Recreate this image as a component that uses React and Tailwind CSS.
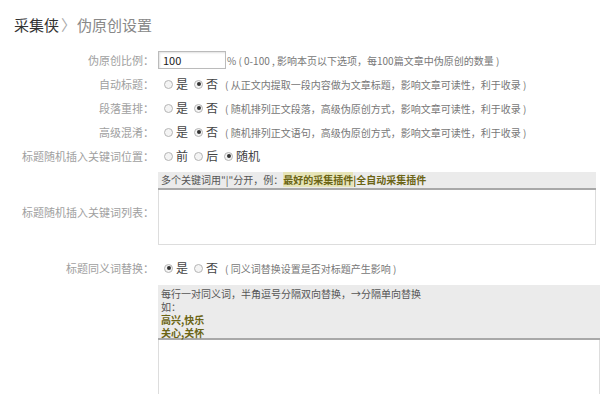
import React from 'react';

const Radio = ({ checked, label }) => (
    <span className="inline-flex items-center mr-[6px]">
        <span className="w-[9px] h-[9px] rounded-full border border-[#b5b5b5] bg-[#f4f4f4] flex items-center justify-center mr-[3px]">
            {checked && <span className="w-[4px] h-[4px] rounded-full bg-[#333]"></span>}
        </span>
        <span className="text-[#444] text-[12px]">{label}</span>
    </span>
);

const Row = ({ label, children, h = 'h-[24px]' }) => (
    <div className={`flex items-center ${h}`}>
        <div className="w-[154px] text-right text-[11px] text-[#a0a0a0] shrink-0">{label}</div>
        <div className="flex items-center pl-[4px] grow">{children}</div>
    </div>
);

const Note = ({ children }) => (
    <span className="text-[10px] text-[#777] ml-[1px]">{children}</span>
);

const App = () => {
    return (
        <div className="w-[600px] h-[394px] bg-white overflow-hidden" style={{ fontFamily: '"Noto Sans CJK SC", "Noto Sans", sans-serif' }}>
            <div className="pl-[14px] pt-[14px] h-[48px] text-[15px] flex items-start">
                <span className="text-[#333]">采集侠</span>
                <span className="text-[#aaa] ml-[2px] mr-[1px]">〉</span>
                <span className="text-[#888]">伪原创设置</span>
            </div>

            <Row label="伪原创比例：">
                <div className="w-[68px] h-[18px] border border-[#bbb] shadow-[inset_1px_1px_2px_rgba(0,0,0,0.12)] text-[11px] text-[#222] pl-[4px] leading-[16px]">100</div>
                <Note>% ( 0-100 , 影响本页以下选项，每100篇文章中伪原创的数量 )</Note>
            </Row>
            <Row label="自动标题：">
                <span className="w-[6px]"></span>
                <Radio label="是" />
                <Radio checked label="否" />
                <Note>( 从正文内提取一段内容做为文章标题，影响文章可读性，利于收录 )</Note>
            </Row>
            <Row label="段落重排：">
                <span className="w-[6px]"></span>
                <Radio label="是" />
                <Radio checked label="否" />
                <Note>( 随机排列正文段落，高级伪原创方式，影响文章可读性，利于收录 )</Note>
            </Row>
            <Row label="高级混淆：">
                <span className="w-[6px]"></span>
                <Radio label="是" />
                <Radio checked label="否" />
                <Note>( 随机排列正文语句，高级伪原创方式，影响文章可读性，利于收录 )</Note>
            </Row>
            <Row label="标题随机插入关键词位置：">
                <span className="w-[6px]"></span>
                <Radio label="前" />
                <Radio label="后" />
                <Radio checked label="随机" />
            </Row>

            <div className="flex mt-[4px]">
                <div className="w-[154px] shrink-0 text-right text-[11px] text-[#a0a0a0] pt-[32px]">标题随机插入关键词列表：</div>
                <div className="ml-[4px] w-[438px]">
                    <div className="bg-[#ebebeb] h-[18px] border-b-2 border-[#a8a8a8] text-[10px] text-[#555] pl-[3px] leading-[16px]">
                        多个关键词用"|"分开，例：<span className="text-[#6b6414] font-bold bg-[#e6e4b8]">最好的采集插件</span><span className="text-[#6b6414] font-bold">|全自动采集插件</span>
                    </div>
                    <div className="h-[55px] border border-t-0 border-[#ddd]"></div>
                </div>
            </div>

            <div className="mt-[11px]">
                <Row label="标题同义词替换：">
                    <span className="w-[6px]"></span>
                    <Radio checked label="是" />
                    <Radio label="否" />
                    <Note>( 同义词替换设置是否对标题产生影响 )</Note>
                </Row>
            </div>

            <div className="flex mt-[5px]">
                <div className="w-[154px] shrink-0"></div>
                <div className="ml-[4px] w-[442px]">
                    <div className="bg-[#ebebeb] h-[55px] border-b-2 border-[#a8a8a8] text-[10px] text-[#555] pl-[3px] pt-[2px] leading-[13px]">
                        <div>每行一对同义词，半角逗号分隔双向替换，→分隔单向替换</div>
                        <div>如：</div>
                        <div className="text-[#6b6414] font-bold">高兴,快乐</div>
                        <div className="text-[#6b6414] font-bold">关心,关怀</div>
                    </div>
                    <div className="h-[80px] border border-t-0 border-[#ddd]"></div>
                </div>
            </div>
        </div>
    );
};

export default App;
